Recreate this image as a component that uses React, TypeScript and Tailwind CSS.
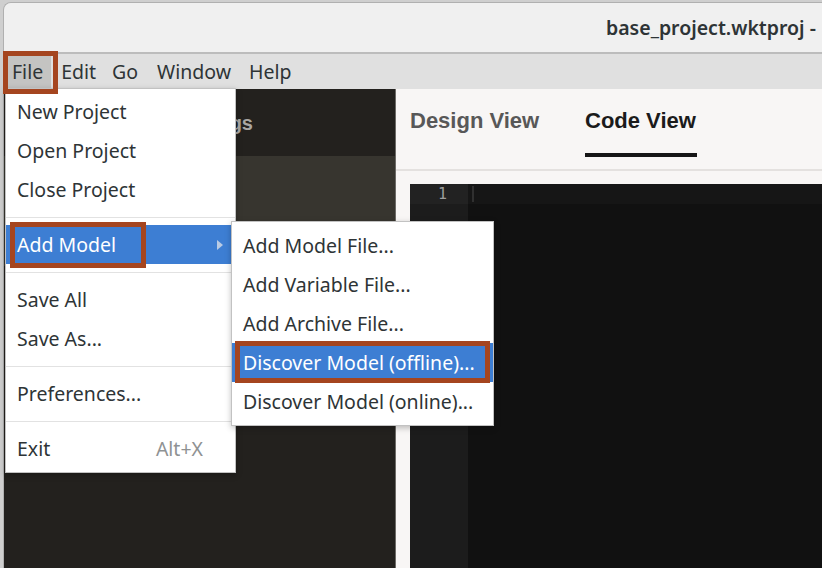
import React from 'react'

const fileItems1 = ['New Project', 'Open Project', 'Close Project']
const fileItems2 = ['Save All', 'Save As...']
const addModelItems = ['Add Model File...', 'Add Variable File...', 'Add Archive File...']

const Separator = () => (
  <div className="h-[16px] flex items-center">
    <div className="h-px w-full bg-[#e2e2e2]" />
  </div>
)

const MenuRow = ({ label, active, shortcut }: { label: string; active?: boolean; shortcut?: string }) => (
  <div
    className={`h-[39px] flex items-center pl-[11px] pr-[14px] whitespace-nowrap ${
      active ? 'bg-[#3d7ed3] text-white' : 'text-[#2e3436]'
    }`}
  >
    <span className="flex-1">{label}</span>
    {shortcut && <span className="text-[#8f9293] pr-[18px]">{shortcut}</span>}
  </div>
)

const App = () => {
  return (
    <div className="w-[822px] h-[568px] relative overflow-hidden bg-[#cfcfcf] font-['Noto_Sans',sans-serif]">
      {/* Window */}
      <div className="ml-[3px] mt-[2px] h-[566px] flex flex-col rounded-tl-[8px] overflow-hidden border-l border-t border-[#b0b0b0]">
        {/* Title bar */}
        <div className="h-[49px] shrink-0 bg-[#f0f0f0] flex items-center pl-[602px] whitespace-nowrap">
          <span className="text-[19.5px] font-semibold text-[#2e3436]">base_project.wktproj -</span>
        </div>
        <div className="h-[2px] shrink-0 bg-[#bcbcbc]" />

        {/* Menu bar */}
        <div className="h-[35px] shrink-0 bg-[#e0e0e0] flex items-center text-[19.5px] text-[#2e3436]">
          <div className="h-full flex items-center pl-[6px] pr-[8px] ml-[2px] bg-[#c4c4c2]">File</div>
          <div className="h-full flex items-center px-[8px] ml-[2px]">Edit</div>
          <div className="h-full flex items-center pl-[8px] pr-[9px]">Go</div>
          <div className="h-full flex items-center pl-[10px] pr-[9px]">Window</div>
          <div className="h-full flex items-center px-[9px]">Help</div>
        </div>

        {/* Content */}
        <div className="flex-1 flex min-h-0">
          {/* Left panel */}
          <div className="w-[392px] shrink-0 bg-[#23211e] flex flex-col border-r border-[#6d6b67]">
            <div className="h-[67px] flex items-center justify-end pr-[142px] font-['Liberation_Sans',sans-serif] text-[20px] font-bold text-[#a9a7a3]">
              Settings
            </div>
            <div className="h-[110px] bg-[#37352f]" />
          </div>

          {/* Right panel */}
          <div className="flex-1 bg-[#f8f6f5] flex flex-col">
            <div className="h-[82px] shrink-0 flex pl-[14px] border-b-2 border-[#e4e1df] font-['Liberation_Sans',sans-serif] text-[22px] font-bold">
              <div className="w-[175px] pt-[18px] text-[#585858] leading-[27px] whitespace-nowrap">Design View</div>
              <div className="flex flex-col pt-[18px]">
                <span className="leading-[27px] text-[#1b1b1b] whitespace-nowrap">Code View</span>
                <div className="mt-[19px] h-[4px] w-[112px] bg-[#161616]" />
              </div>
            </div>
            <div className="flex-1 ml-[14px] mt-[13px] flex min-h-0">
              <div className="w-[58px] bg-[#1c1c1c] flex flex-col">
                <div className="h-[20px] bg-[#222222] flex items-center justify-end pr-[21px] font-['DejaVu_Sans_Mono',monospace] text-[15px] text-[#9d9d9d]">
                  1
                </div>
              </div>
              <div className="flex-1 bg-[#111111] flex flex-col">
                <div className="h-[20px] bg-[#161616] flex items-center pl-[4px]">
                  <div className="w-[2px] h-[16px] bg-[#303030]" />
                </div>
              </div>
            </div>
          </div>
        </div>
      </div>

      {/* File menu */}
      <div className="absolute left-[5px] top-[88px] w-[231px] bg-white border border-[#c2c2c2] shadow-[0_2px_6px_rgba(0,0,0,0.25)] pt-[3px] pb-[4px] text-[19.5px]">
        {fileItems1.map((l) => (
          <MenuRow key={l} label={l} />
        ))}
        <Separator />
        <div className="h-[39px] flex items-center pl-[11px] pr-[12px] bg-[#3d7ed3] text-white whitespace-nowrap">
          <span className="flex-1">Add Model</span>
          <svg width="6" height="10" viewBox="0 0 6 10">
            <polygon points="0,0 6,5 0,10" fill="#b9cbe4" />
          </svg>
        </div>
        <Separator />
        {fileItems2.map((l) => (
          <MenuRow key={l} label={l} />
        ))}
        <Separator />
        <MenuRow label="Preferences..." />
        <Separator />
        <MenuRow label="Exit" shortcut="Alt+X" />
      </div>

      {/* Add Model submenu */}
      <div className="absolute left-[231px] top-[221px] w-[263px] bg-white border border-[#c2c2c2] shadow-[0_2px_6px_rgba(0,0,0,0.25)] pt-[4px] pb-[4px] text-[19.5px]">
        {addModelItems.map((l) => (
          <MenuRow key={l} label={l} />
        ))}
        <MenuRow label="Discover Model (offline)..." active />
        <MenuRow label="Discover Model (online)..." />
      </div>

      {/* Annotation boxes */}
      <div className="absolute left-[3px] top-[51px] w-[55px] h-[43px] border-[5px] border-[#a5451f]" />
      <div className="absolute left-[10px] top-[222px] w-[136px] h-[46px] border-[5px] border-[#a5451f]" />
      <div className="absolute left-[235px] top-[341px] w-[255px] h-[42px] border-[5px] border-[#a5451f]" />
    </div>
  )
}

export default App
